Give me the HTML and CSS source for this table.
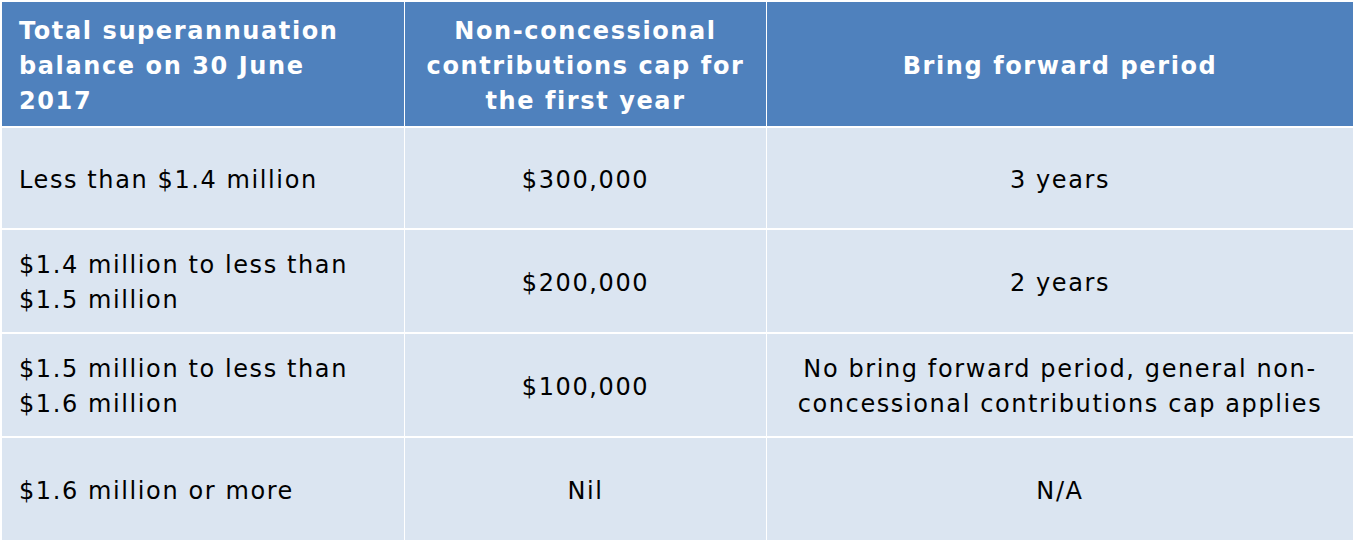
FILE: index.html
```html
<!DOCTYPE html>
<html>
<head>
<meta charset="utf-8">
<link rel="stylesheet" href="styles.css">
</head>
<body>
<div class="table">
  <div class="cell head left">Total superannuation balance on 30 June 2017</div>
  <div class="cell head center">Non-concessional contributions cap for the first year</div>
  <div class="cell head center">Bring forward period</div>

  <div class="cell left">Less than $1.4 million</div>
  <div class="cell center">$300,000</div>
  <div class="cell center">3 years</div>

  <div class="cell left">$1.4 million to less than $1.5 million</div>
  <div class="cell center">$200,000</div>
  <div class="cell center">2 years</div>

  <div class="cell left">$1.5 million to less than $1.6 million</div>
  <div class="cell center">$100,000</div>
  <div class="cell center">No bring forward period, general non-concessional contributions cap applies</div>

  <div class="cell left">$1.6 million or more</div>
  <div class="cell center">Nil</div>
  <div class="cell center">N/A</div>
</div>
</body>
</html>
```

FILE: styles.css
```css
html, body {
  margin: 0;
  padding: 0;
  background: #ffffff;
}
body {
  padding: 2px 0 0 2px;
  font-family: "DejaVu Sans", Verdana, sans-serif;
  font-size: 24px;
  line-height: 35px;
  letter-spacing: 1.6px;
  color: #000000;
}
.table {
  display: grid;
  grid-template-columns: 402px 361px 586px;
  grid-template-rows: 124px 100px 102px 102px 102px;
  column-gap: 1px;
  row-gap: 2px;
  background: #ffffff;
}
.cell {
  background: #dbe5f1;
  display: flex;
  flex-direction: column;
  justify-content: center;
  padding: 4px 14px 0 14px;
}
.head {
  background: #4f81bd;
  color: #ffffff;
  font-weight: bold;
}
.left {
  text-align: left;
  padding-left: 17px;
  padding-right: 30px;
}
.center {
  text-align: center;
}
```
